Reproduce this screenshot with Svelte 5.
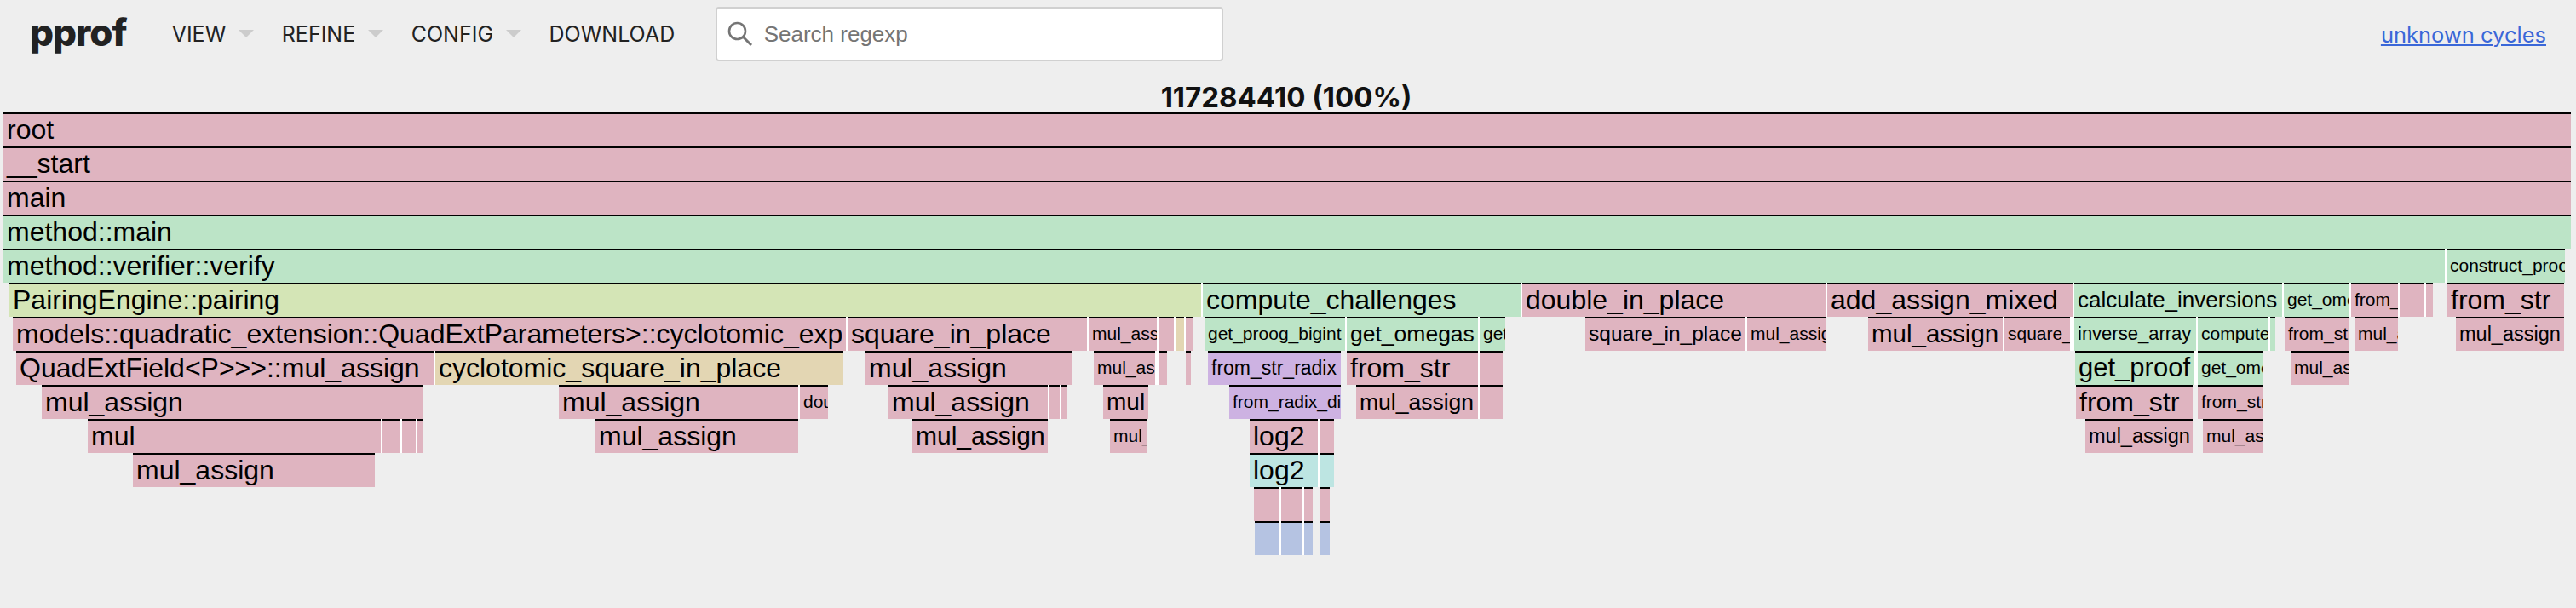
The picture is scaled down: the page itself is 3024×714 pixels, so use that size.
<script>
  const PINK = 'p', GREEN = 'g', LIME = 'l', TAN = 't', PURPLE = 'v', TEAL = 'c', BLUE = 'b';
  // [row, x0, x1, colour, label, fontSize]
  const raw = [
    [0, 4, 3018, PINK, 'root', 32],
    [1, 4, 3018, PINK, '__start', 32],
    [2, 4, 3018, PINK, 'main', 32],
    [3, 4, 3018, GREEN, 'method::main', 32],
    [4, 4, 2870, GREEN, 'method::verifier::verify', 32],
    [4, 2872, 3011, GREEN, 'construct_proof', 21],

    [5, 11, 1410, LIME, 'PairingEngine::pairing', 32],
    [5, 1412, 1785, GREEN, 'compute_challenges', 32],
    [5, 1787, 2143, PINK, 'double_in_place', 32],
    [5, 2145, 2433, PINK, 'add_assign_mixed', 32],
    [5, 2435, 2679, GREEN, 'calculate_inversions', 26],
    [5, 2681, 2758, GREEN, 'get_omegas', 21],
    [5, 2760, 2815, PINK, 'from_str', 21],
    [5, 2817, 2846, PINK, '', 21],
    [5, 2848, 2856, PINK, '', 21],
    [5, 2873, 3010, PINK, 'from_str', 32],

    [6, 15, 993, PINK, 'models::quadratic_extension::QuadExtParameters>::cyclotomic_exp', 32],
    [6, 995, 1276, PINK, 'square_in_place', 32],
    [6, 1278, 1358, PINK, 'mul_assign', 21],
    [6, 1360, 1378, PINK, '', 21],
    [6, 1380, 1390, TAN, '', 21],
    [6, 1392, 1401, PINK, '', 21],
    [6, 1414, 1579, GREEN, 'get_proog_bigint', 21],
    [6, 1581, 1735, GREEN, 'get_omegas', 26.5],
    [6, 1737, 1767, GREEN, 'get_omegas', 21],
    [6, 1861, 2049, PINK, 'square_in_place', 24.5],
    [6, 2051, 2143, PINK, 'mul_assign', 21],
    [6, 2193, 2351, PINK, 'mul_assign', 29.5],
    [6, 2353, 2430, PINK, 'square_in_place', 21],
    [6, 2435, 2578, GREEN, 'inverse_array', 22],
    [6, 2580, 2663, GREEN, 'compute_powers', 21],
    [6, 2665, 2671, GREEN, '', 21],
    [6, 2682, 2758, PINK, 'from_str', 21],
    [6, 2764, 2815, PINK, 'mul_assign', 21],
    [6, 2883, 3010, PINK, 'mul_assign', 23.5],

    [7, 19, 509, PINK, 'QuadExtField<P>>>::mul_assign', 32],
    [7, 511, 990, TAN, 'cyclotomic_square_in_place', 32],
    [7, 1016, 1258, PINK, 'mul_assign', 32],
    [7, 1284, 1356, PINK, 'mul_assign', 21],
    [7, 1361, 1370, PINK, '', 21],
    [7, 1392, 1398, PINK, '', 21],
    [7, 1418, 1574, PURPLE, 'from_str_radix', 23],
    [7, 1581, 1735, PINK, 'from_str', 32],
    [7, 1737, 1764, PINK, '', 21],
    [7, 2436, 2575, GREEN, 'get_proof', 31],
    [7, 2580, 2656, GREEN, 'get_omegas', 21],
    [7, 2689, 2758, PINK, 'mul_assign', 21],

    [8, 49, 497, PINK, 'mul_assign', 32],
    [8, 656, 937, PINK, 'mul_assign', 32],
    [8, 939, 972, PINK, 'double', 21],
    [8, 1043, 1230, PINK, 'mul_assign', 32],
    [8, 1232, 1244, PINK, '', 21],
    [8, 1246, 1252, PINK, '', 21],
    [8, 1295, 1348, PINK, 'mul', 28],
    [8, 1443, 1574, PURPLE, 'from_radix_digits', 21],
    [8, 1592, 1735, PINK, 'mul_assign', 26.5],
    [8, 1737, 1764, PINK, '', 21],
    [8, 2437, 2574, PINK, 'from_str', 32],
    [8, 2580, 2656, PINK, 'from_str', 21],

    [9, 103, 447, PINK, 'mul', 32],
    [9, 449, 470, PINK, '', 21],
    [9, 472, 488, PINK, '', 21],
    [9, 489, 497, PINK, '', 21],
    [9, 699, 937, PINK, 'mul_assign', 32],
    [9, 1071, 1230, PINK, 'mul_assign', 30],
    [9, 1303, 1347, PINK, 'mul_assign', 21],
    [9, 1467, 1547, PINK, 'log2', 32],
    [9, 1549, 1566, PINK, '', 21],
    [9, 2448, 2574, PINK, 'mul_assign', 23.5],
    [9, 2586, 2656, PINK, 'mul_assign', 21],

    [10, 156, 440, PINK, 'mul_assign', 32],
    [10, 1467, 1547, TEAL, 'log2', 32],
    [10, 1549, 1566, TEAL, '', 21],

    [11, 1472, 1501, PINK, '', 21],
    [11, 1504, 1529, PINK, '', 21],
    [11, 1531, 1541, PINK, '', 21],
    [11, 1550, 1561, PINK, '', 21],

    [12, 1473, 1501, BLUE, '', 21],
    [12, 1504, 1529, BLUE, '', 21],
    [12, 1531, 1541, BLUE, '', 21],
    [12, 1550, 1561, BLUE, '', 21]
  ];

  const ROW = 40;
  const boxes = raw.map(([row, x0, x1, colour, label, size]) => ({
    row, x0, x1, colour, label, size,
    style: `left:${x0}px;top:${row * ROW}px;width:${x1 - x0}px;font-size:${size}px`
  }));

  // Neighbouring boxes on one row are parted by a thin white gap.
  const gaps = [];
  for (let i = 1; i < raw.length; i++) {
    const a = raw[i - 1], b = raw[i];
    if (a[0] === b[0] && b[1] - a[2] > 0 && b[1] - a[2] <= 5) {
      gaps.push(`left:${a[2]}px;top:${a[0] * ROW}px;width:${b[1] - a[2]}px`);
    }
  }

  const menus = [
    { label: 'VIEW', caret: true },
    { label: 'REFINE', caret: true },
    { label: 'CONFIG', caret: true },
    { label: 'DOWNLOAD', caret: false }
  ];
</script>

<header class="top">
  <div class="logo">pprof</div>
  <nav class="menus">
    {#each menus as m}
      <div class="menu">
        <span>{m.label}</span>
        {#if m.caret}<i class="caret"></i>{/if}
      </div>
    {/each}
  </nav>
  <div class="search">
    <svg class="glass" viewBox="0 0 30 30" width="30" height="30" aria-hidden="true">
      <circle cx="11.5" cy="11.5" r="9.5" fill="none" stroke="#757575" stroke-width="2.6" />
      <path d="M18.5 18.5 L28 28" fill="none" stroke="#757575" stroke-width="3" />
    </svg>
    <span class="placeholder">Search regexp</span>
  </div>
  <a class="link" href="#top">unknown cycles</a>
</header>

<div class="title">117284410 (100%)</div>

<main class="flame">
  {#each gaps as g}
    <div class="gap" style={g}></div>
  {/each}
  {#each boxes as b}
    <div class="box {b.colour}" style={b.style}>{b.label}</div>
  {/each}
</main>

<style>
  :global(body) {
    margin: 0;
    background: #eeeeee;
    min-height: 100vh;
    overflow: hidden;
  }
  .top {
    display: flex;
    align-items: center;
    height: 80px;
    font-family: Inter, "Liberation Sans", sans-serif;
    color: #222;
  }
  .logo {
    margin-left: 35px;
    font-size: 44px;
    font-weight: 800;
    letter-spacing: -1px;
    line-height: 1;
    margin-top: -4px;
  }
  .menus {
    display: flex;
    align-items: center;
    margin-left: 53px;
  }
  .menu {
    display: flex;
    align-items: center;
    font-size: 25px;
    margin-right: 32.5px;
  }
  .caret {
    width: 0;
    height: 0;
    margin-left: 15px;
    border-left: 9px solid transparent;
    border-right: 9px solid transparent;
    border-top: 9px solid #cccccc;
    margin-top: -2px;
  }
  .search {
    display: flex;
    align-items: center;
    box-sizing: border-box;
    width: 596px;
    height: 64px;
    margin-left: 15px;
    padding-left: 12px;
    background: #fff;
    border: 2px solid #d0d0d0;
    border-radius: 4px;
  }
  .placeholder {
    margin-left: 13px;
    font-family: "Liberation Sans", Arial, sans-serif;
    font-size: 26px;
    color: #757575;
  }
  .link {
    margin-left: auto;
    margin-right: 35px;
    font-size: 25.5px;
    color: #3a67d8;
    text-decoration: underline;
  }
  .title {
    margin-top: 16px;
    height: 36px;
    line-height: 36px;
    text-align: center;
    font-family: Inter, "Liberation Sans", sans-serif;
    font-size: 33px;
    font-weight: 700;
    color: #111;
    transform: translateX(-2px);
  }
  .flame {
    position: relative;
    height: 520px;
  }
  .gap {
    position: absolute;
    height: 40px;
    background: #fff;
  }
  .box {
    position: absolute;
    box-sizing: border-box;
    height: 40px;
    padding-left: 4px;
    border-top: 2px solid #000;
    overflow: hidden;
    white-space: pre;
    line-height: 36px;
    font-family: "Liberation Sans", Arial, sans-serif;
    color: #000;
  }
  .p { background: #dfb4c0; }
  .g { background: #bce4c7; }
  .l { background: #d4e5b6; }
  .t { background: #e3d6b3; }
  .v { background: #cdb2e2; }
  .c { background: #bde5e2; }
  .b { background: #b5c3e2; }
</style>
